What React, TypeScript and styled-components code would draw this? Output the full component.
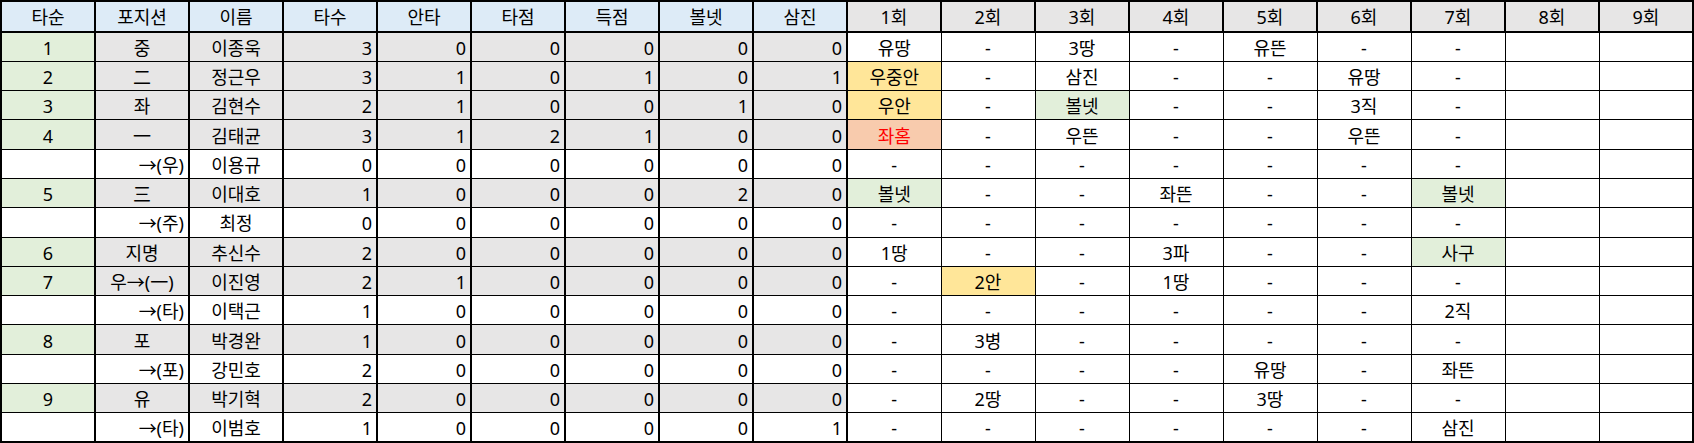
import React from "react";
import styled, { createGlobalStyle } from "styled-components";

const GlobalStyle = createGlobalStyle`
  html, body { margin: 0; padding: 0; background: #ffffff; }
  body { font-family: "Noto Sans", "Noto Sans CJK KR", sans-serif; }
`;

type Tone = "none" | "green" | "grey" | "yellow" | "orange";

const toneColor: Record<Tone, string> = {
  none: "#ffffff",
  green: "#e2efda",
  grey: "#e7e6e6",
  yellow: "#ffe699",
  orange: "#f8cbad",
};

const Sheet = styled.table`
  width: 1694px;
  table-layout: fixed;
  border-collapse: collapse;
  border: 2px solid #000;
  font-family: "Noto Sans", "Noto Sans CJK KR", sans-serif;
  font-size: 18px;
  color: #000;
`;

const HeadRow = styled.tr`
  height: 31px;
`;

const BodyRow = styled.tr`
  height: 29.3px;
`;

const HeadCell = styled.th<{ $tone: "blue" | "grey" }>`
  background: ${(p) => (p.$tone === "blue" ? "#ddebf7" : "#e7e6e6")};
  border: 2px solid #000;
  font-weight: 400;
  text-align: center;
  padding: 1px 0 0;
  line-height: 24px;
  white-space: nowrap;
  overflow: hidden;
`;

const Cell = styled.td<{ $tone: Tone; $align: "left" | "center" | "right"; $thick?: boolean; $red?: boolean }>`
  background: ${(p) => toneColor[p.$tone]};
  color: ${(p) => (p.$red ? "#ff0000" : "#000")};
  text-align: ${(p) => p.$align};
  border-top: 1px solid #000;
  border-bottom: 1px solid #000;
  border-left: ${(p) => (p.$thick ? "2px" : "1px")} solid #000;
  border-right: ${(p) => (p.$thick ? "2px" : "1px")} solid #000;
  padding: 2px 4px 0 4px;
  line-height: 24px;
  white-space: nowrap;
  overflow: hidden;
`;

type Play = string | [string, Tone] | [string, Tone, boolean];

interface Batter {
  order: string;
  pos: string;
  name: string;
  stats: number[];
  plays: Play[];
}

const batters: Batter[] = [
  { order: "1", pos: "중", name: "이종욱", stats: [3, 0, 0, 0, 0, 0], plays: ["유땅", "-", "3땅", "-", "유뜬", "-", "-", "", ""] },
  { order: "2", pos: "二", name: "정근우", stats: [3, 1, 0, 1, 0, 1], plays: [["우중안", "yellow"], "-", "삼진", "-", "-", "유땅", "-", "", ""] },
  { order: "3", pos: "좌", name: "김현수", stats: [2, 1, 0, 0, 1, 0], plays: [["우안", "yellow"], "-", ["볼넷", "green"], "-", "-", "3직", "-", "", ""] },
  { order: "4", pos: "一", name: "김태균", stats: [3, 1, 2, 1, 0, 0], plays: [["좌홈", "orange", true], "-", "우뜬", "-", "-", "우뜬", "-", "", ""] },
  { order: "", pos: "→(우)", name: "이용규", stats: [0, 0, 0, 0, 0, 0], plays: ["-", "-", "-", "-", "-", "-", "-", "", ""] },
  { order: "5", pos: "三", name: "이대호", stats: [1, 0, 0, 0, 2, 0], plays: [["볼넷", "green"], "-", "-", "좌뜬", "-", "-", ["볼넷", "green"], "", ""] },
  { order: "", pos: "→(주)", name: "최정", stats: [0, 0, 0, 0, 0, 0], plays: ["-", "-", "-", "-", "-", "-", "-", "", ""] },
  { order: "6", pos: "지명", name: "추신수", stats: [2, 0, 0, 0, 0, 0], plays: ["1땅", "-", "-", "3파", "-", "-", ["사구", "green"], "", ""] },
  { order: "7", pos: "우→(一)", name: "이진영", stats: [2, 1, 0, 0, 0, 0], plays: ["-", ["2안", "yellow"], "-", "1땅", "-", "-", "-", "", ""] },
  { order: "", pos: "→(타)", name: "이택근", stats: [1, 0, 0, 0, 0, 0], plays: ["-", "-", "-", "-", "-", "-", "2직", "", ""] },
  { order: "8", pos: "포", name: "박경완", stats: [1, 0, 0, 0, 0, 0], plays: ["-", "3병", "-", "-", "-", "-", "-", "", ""] },
  { order: "", pos: "→(포)", name: "강민호", stats: [2, 0, 0, 0, 0, 0], plays: ["-", "-", "-", "-", "유땅", "-", "좌뜬", "", ""] },
  { order: "9", pos: "유", name: "박기혁", stats: [2, 0, 0, 0, 0, 0], plays: ["-", "2땅", "-", "-", "3땅", "-", "-", "", ""] },
  { order: "", pos: "→(타)", name: "이범호", stats: [1, 0, 0, 0, 0, 1], plays: ["-", "-", "-", "-", "-", "-", "삼진", "", ""] },
];

const statHeads = ["타순", "포지션", "이름", "타수", "안타", "타점", "득점", "볼넷", "삼진"];
const innings = Array.from({ length: 9 }, (_, i) => `${i + 1}회`);

function PlayCell({ play }: { play: Play }) {
  if (typeof play === "string") {
    return (
      <Cell $tone="none" $align="center">
        {play}
      </Cell>
    );
  }
  const [text, tone, red] = play;
  return (
    <Cell $tone={tone} $align="center" $red={red}>
      {text}
    </Cell>
  );
}

export default function App() {
  return (
    <>
      <GlobalStyle />
      <Sheet>
        <thead>
          <HeadRow>
            {statHeads.map((h) => (
              <HeadCell key={h} $tone="blue">
                {h}
              </HeadCell>
            ))}
            {innings.map((h) => (
              <HeadCell key={h} $tone="grey">
                {h}
              </HeadCell>
            ))}
          </HeadRow>
        </thead>
        <tbody>
          {batters.map((b, i) => {
            const starter = b.order !== "";
            const band: Tone = starter ? "grey" : "none";
            return (
              <BodyRow key={i}>
                <Cell $tone={starter ? "green" : "none"} $align="center" $thick>
                  {b.order}
                </Cell>
                <Cell $tone={band} $align={starter ? "center" : "right"} $thick>
                  {b.pos}
                </Cell>
                <Cell $tone={band} $align="center" $thick>
                  {b.name}
                </Cell>
                {b.stats.map((s, j) => (
                  <Cell key={j} $tone={band} $align="right" $thick>
                    {s}
                  </Cell>
                ))}
                {b.plays.map((p, j) => (
                  <PlayCell key={j} play={p} />
                ))}
              </BodyRow>
            );
          })}
        </tbody>
      </Sheet>
    </>
  );
}
